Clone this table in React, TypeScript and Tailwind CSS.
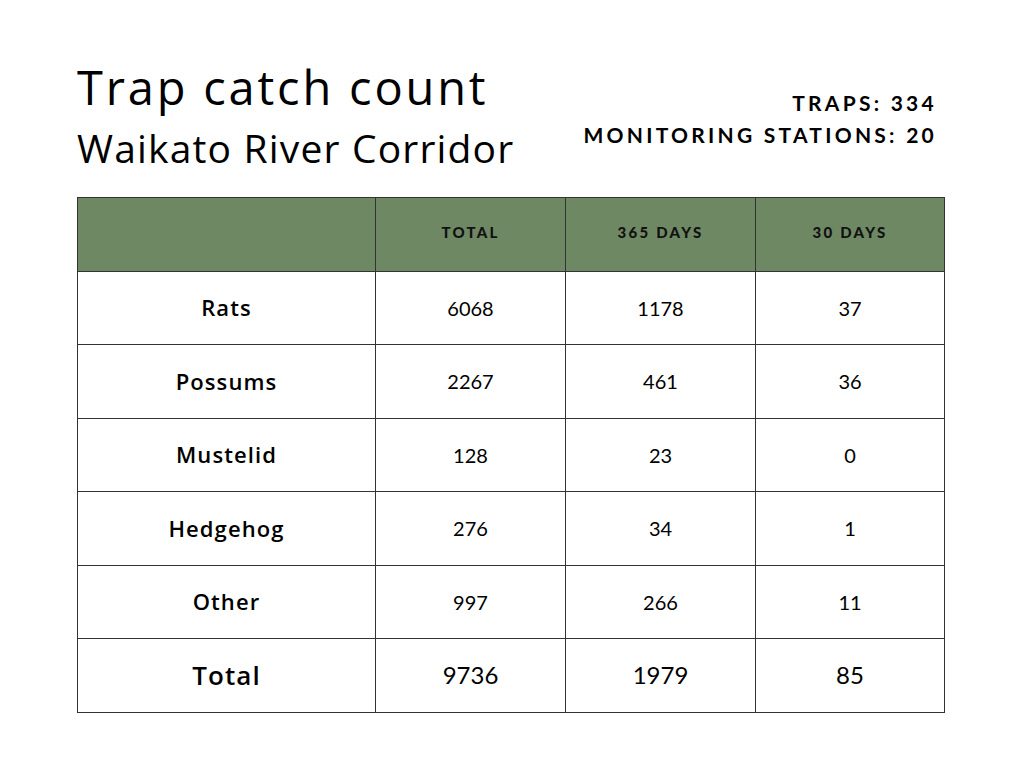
const rows = [
  { name: "Rats", total: 6068, year: 1178, month: 37 },
  { name: "Possums", total: 2267, year: 461, month: 36 },
  { name: "Mustelid", total: 128, year: 23, month: 0 },
  { name: "Hedgehog", total: 276, year: 34, month: 1 },
  { name: "Other", total: 997, year: 266, month: 11 },
]

const headers = ["TOTAL", "365 DAYS", "30 DAYS"]

export default function App() {
  return (
    <div className="w-[1024px] h-[768px] bg-white text-black font-['Open_Sans',sans-serif]">
      <div className="flex justify-between pl-[77px] pr-[87px] pt-[56px]">
        <div>
          <h1 className="text-[47px] leading-[62px] font-normal tracking-[0.06em]">Trap catch count</h1>
          <h2 className="text-[39px] leading-[60px] font-normal tracking-[0.03em]">Waikato River Corridor</h2>
        </div>
        <div className="pt-[31px] text-right font-bold text-[21px] leading-[32px] tracking-[0.155em] font-['Lato',sans-serif]">
          <div>TRAPS: 334</div>
          <div>MONITORING STATIONS: 20</div>
        </div>
      </div>

      <table className="ml-[77px] mt-[19px] border-collapse">
        <colgroup>
          <col className="w-[298px]" />
          <col className="w-[190px]" />
          <col className="w-[190px]" />
          <col className="w-[189px]" />
        </colgroup>
        <thead>
          <tr className="h-[73.5px] bg-[#6f8864]">
            <th className="border border-[#333]" />
            {headers.map((h) => (
              <th key={h} className="border border-[#333] pb-[4px] text-[15px] font-black tracking-[0.15em] text-[#111] font-['Lato',sans-serif]">
                {h}
              </th>
            ))}
          </tr>
        </thead>
        <tbody>
          {rows.map((r) => (
            <tr key={r.name} className="h-[73.5px]">
              <td className="border border-[#333] text-center text-[22px] font-semibold tracking-[0.05em]">{r.name}</td>
              <td className="border border-[#333] text-center text-[20px] font-['Lato',sans-serif]">{r.total}</td>
              <td className="border border-[#333] text-center text-[20px] font-['Lato',sans-serif]">{r.year}</td>
              <td className="border border-[#333] text-center text-[20px] font-['Lato',sans-serif]">{r.month}</td>
            </tr>
          ))}
          <tr className="h-[73.5px]">
            <td className="border border-[#333] text-center text-[26px] font-semibold tracking-[0.04em]">Total</td>
            <td className="border border-[#333] text-center text-[24px] font-['Lato',sans-serif]">9736</td>
            <td className="border border-[#333] text-center text-[24px] font-['Lato',sans-serif]">1979</td>
            <td className="border border-[#333] text-center text-[24px] font-['Lato',sans-serif]">85</td>
          </tr>
        </tbody>
      </table>
    </div>
  )
}
